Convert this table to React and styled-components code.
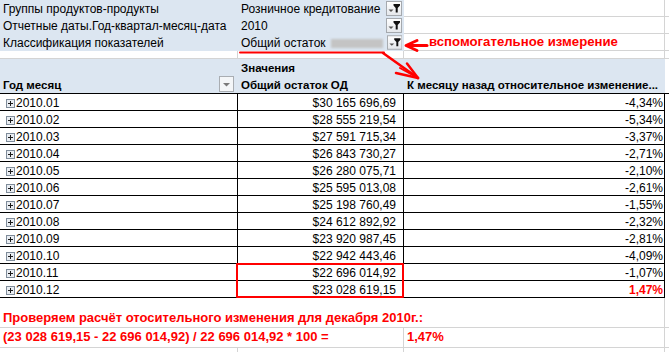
import React from "react";
import styled, { createGlobalStyle } from "styled-components";

const GlobalStyle = createGlobalStyle`
  html, body {
    margin: 0;
    padding: 0;
    background: #fff;
  }
  body {
    font-family: "Liberation Sans", Arial, sans-serif;
    font-size: 12px;
    color: #000;
  }
`;

const GRID = "#d4d4d4";
const SHADE = "#dce6f1";
const RED = "#ff0000";
const COLS = "238px 166px 261px 1fr";

const Sheet = styled.div`
  position: relative;
  width: 669px;
  height: 352px;
  overflow: hidden;
`;

const Row = styled.div`
  display: grid;
  grid-template-columns: ${COLS};
  height: ${(p) => p.$h}px;
`;

const Cell = styled.div`
  box-sizing: border-box;
  display: flex;
  align-items: flex-end;
  justify-content: ${(p) => (p.$right ? "flex-end" : "flex-start")};
  gap: ${(p) => p.$gap ?? 2}px;
  min-width: 0;
  padding: 0 ${(p) => p.$pr ?? 3}px ${(p) => p.$pb ?? 0}px ${(p) => p.$pl ?? 3}px;
  line-height: 14px;
  white-space: nowrap;
  background: ${(p) => (p.$shade ? SHADE : "transparent")};
  border-right: 1px solid ${(p) => p.$vline || "transparent"};
  border-bottom: 1px solid ${(p) => p.$hline || "transparent"};
  font-weight: ${(p) => (p.$bold ? 700 : 400)};
  color: ${(p) => (p.$red ? RED : "#000")};
  grid-column: ${(p) => p.$span || "auto"};
`;

const FilterValue = styled(Cell)`
  padding-right: 1px;
  align-items: center;
  & > span {
    align-self: flex-end;
  }
`;

const HeaderBlock = styled.div`
  display: grid;
  grid-template-columns: ${COLS};
  grid-template-rows: 17px 17px;
`;

const HeaderCell = styled(Cell)`
  font-size: 11.5px;
`;

const DataTable = styled.div`
  border-top: 1px solid #000;
`;

const DataRow = styled(Row)`
  height: 17px;
`;

const DataCell = styled(Cell)`
  border-bottom: 1px solid #000;
  border-right: 1px solid ${(p) => (p.$edge ? "#000" : "transparent")};
`;

const CheckCell = styled(Cell)`
  font-size: 13px;
`;

const Blur = styled.span`
  display: inline-block;
  width: 54px;
  height: 9px;
  margin: 0 0 2px 3px;
  background: #c4c4c4;
  filter: blur(1.2px);
`;

const Note = styled.span`
  font-weight: 700;
  font-size: 13.2px;
  color: ${RED};
  padding-left: 22px;
  padding-bottom: 1px;
`;

const Overlay = styled.svg`
  position: absolute;
  left: 0;
  top: 0;
  pointer-events: none;
`;

const FilterButton = () => (
  <svg width="16" height="15" viewBox="0 0 16 15" style={{ alignSelf: "center" }}>
    <defs>
      <linearGradient id="fb" x1="0" y1="0" x2="0" y2="1">
        <stop offset="0" stopColor="#ffffff" />
        <stop offset="1" stopColor="#e4e7eb" />
      </linearGradient>
    </defs>
    <rect x="0.5" y="0.5" width="15" height="14" fill="url(#fb)" stroke="#a5a9ae" />
    <path d="M2.5 8.5h5l-2.5 2.5z" fill="#555" />
    <path d="M7.5 3h6.5v1.6l-2.3 2.4v4.5h-2V7L7.5 4.6z" fill="#111" />
  </svg>
);

const DropButton = () => (
  <svg width="15" height="16" viewBox="0 0 15 16">
    <rect x="0.5" y="0.5" width="14" height="15" fill="#f4f6f8" stroke="#a9adb2" />
    <path d="M4 7h7l-3.5 3.5z" fill="#7a7a7a" />
  </svg>
);

const Expand = () => (
  <svg width="9" height="9" viewBox="0 0 9 9" style={{ margin: "0 0 2px 6px" }}>
    <rect x="0.5" y="0.5" width="8" height="8" fill="#e9edf2" stroke="#7f8c9a" />
    <path d="M2 4.5h5M4.5 2v5" stroke="#1a1a1a" strokeWidth="1" />
  </svg>
);

const filters = [
  ["Группы продуктов-продукты", "Розничное кредитование"],
  ["Отчетные даты.Год-квартал-месяц-дата", "2010"],
  ["Классификация показателей", "Общий остаток"],
];

const rows = [
  ["2010.01", "$30 165 696,69", "-4,34%"],
  ["2010.02", "$28 555 219,54", "-5,34%"],
  ["2010.03", "$27 591 715,34", "-3,37%"],
  ["2010.04", "$26 843 730,27", "-2,71%"],
  ["2010.05", "$26 280 075,71", "-2,10%"],
  ["2010.06", "$25 595 013,08", "-2,61%"],
  ["2010.07", "$25 198 760,49", "-1,55%"],
  ["2010.08", "$24 612 892,92", "-2,32%"],
  ["2010.09", "$23 920 987,45", "-2,81%"],
  ["2010.10", "$22 942 443,46", "-4,09%"],
  ["2010.11", "$22 696 014,92", "-1,07%"],
  ["2010.12", "$23 028 619,15", "1,47%"],
];

const App = () => {
  return (
    <Sheet>
      <GlobalStyle />
      {filters.map(([label, value], i) => (
        <Row $h={17} key={label}>
          <Cell $shade>{label}</Cell>
          <FilterValue $shade>
            <span>{value}</span>
            {i === 2 && <Blur />}
            <span style={{ flex: 1 }} />
            <FilterButton />
          </FilterValue>
          <Cell $vline={GRID} $hline={GRID}>
            {i === 2 && <Note>вспомогательное измерение</Note>}
          </Cell>
          <Cell $hline={GRID} />
        </Row>
      ))}

      <Row $h={8}>
        <Cell $vline={GRID} $hline={GRID} />
        <Cell $vline={GRID} $hline={GRID} />
        <Cell $vline={GRID} $hline={GRID} />
        <Cell $hline={GRID} />
      </Row>

      <HeaderBlock>
        <HeaderCell $shade />
        <HeaderCell $shade $bold>Значения</HeaderCell>
        <HeaderCell $shade />
        <HeaderCell />
        <HeaderCell $shade $bold $pr={3} style={{ justifyContent: "space-between", alignItems: "stretch" }}>
          <span style={{ alignSelf: "flex-end" }}>Год месяц</span>
          <DropButton />
        </HeaderCell>
        <HeaderCell $shade $bold>Общий остаток ОД</HeaderCell>
        <HeaderCell $shade $bold>К месяцу назад относительное изменение...</HeaderCell>
        <HeaderCell />
      </HeaderBlock>

      <DataTable>
        {rows.map(([month, total, change], i) => (
          <DataRow key={month}>
            <DataCell $edge $pl={0} $gap={1}>
              <Expand />
              {month}
            </DataCell>
            <DataCell $edge $right $pr={7}>{total}</DataCell>
            <DataCell $edge $right $pr={1} $bold={i === 11} $red={i === 11}>
              {change}
            </DataCell>
            <Cell />
          </DataRow>
        ))}
      </DataTable>

      <Row $h={30}>
        <CheckCell $span="1 / 4" $vline={GRID} $hline={GRID} $bold $red $pb={2}>
          Проверяем расчёт отосительного изменения для декабря 2010г.:
        </CheckCell>
        <Cell $hline={GRID} />
      </Row>

      <Row $h={20}>
        <CheckCell $span="1 / 3" $vline={GRID} $hline={GRID} $bold $red $pb={3}>
          (23 028 619,15 - 22 696 014,92) / 22 696 014,92 * 100 =
        </CheckCell>
        <CheckCell $vline={GRID} $hline={GRID} $bold $red $pb={3}>
          1,47%
        </CheckCell>
        <Cell $hline={GRID} />
      </Row>

      <Row $h={10}>
        <Cell $vline={GRID} />
        <Cell $vline={GRID} />
        <Cell $vline={GRID} />
        <Cell />
      </Row>

      <Overlay width="669" height="352" viewBox="0 0 669 352">
        <g stroke={RED} fill="none" strokeLinecap="round" strokeLinejoin="round">
          <line x1="240" y1="52.5" x2="384" y2="52.5" strokeWidth="2" />
          <line x1="383" y1="53" x2="418" y2="78" strokeWidth="2.5" />
          <line x1="396" y1="73" x2="418" y2="78" strokeWidth="2.5" />
          <line x1="400" y1="68" x2="418" y2="78" strokeWidth="2" />
          <line x1="407" y1="63.5" x2="418" y2="78" strokeWidth="2.5" />
          <line x1="408" y1="45.5" x2="427" y2="45.5" strokeWidth="3" />
          <polyline points="417,40.5 406,45.5 417,50.5" strokeWidth="3" />
          <rect x="237" y="264" width="166" height="33" strokeWidth="2" strokeLinecap="butt" />
        </g>
      </Overlay>
    </Sheet>
  );
};

export default App;
